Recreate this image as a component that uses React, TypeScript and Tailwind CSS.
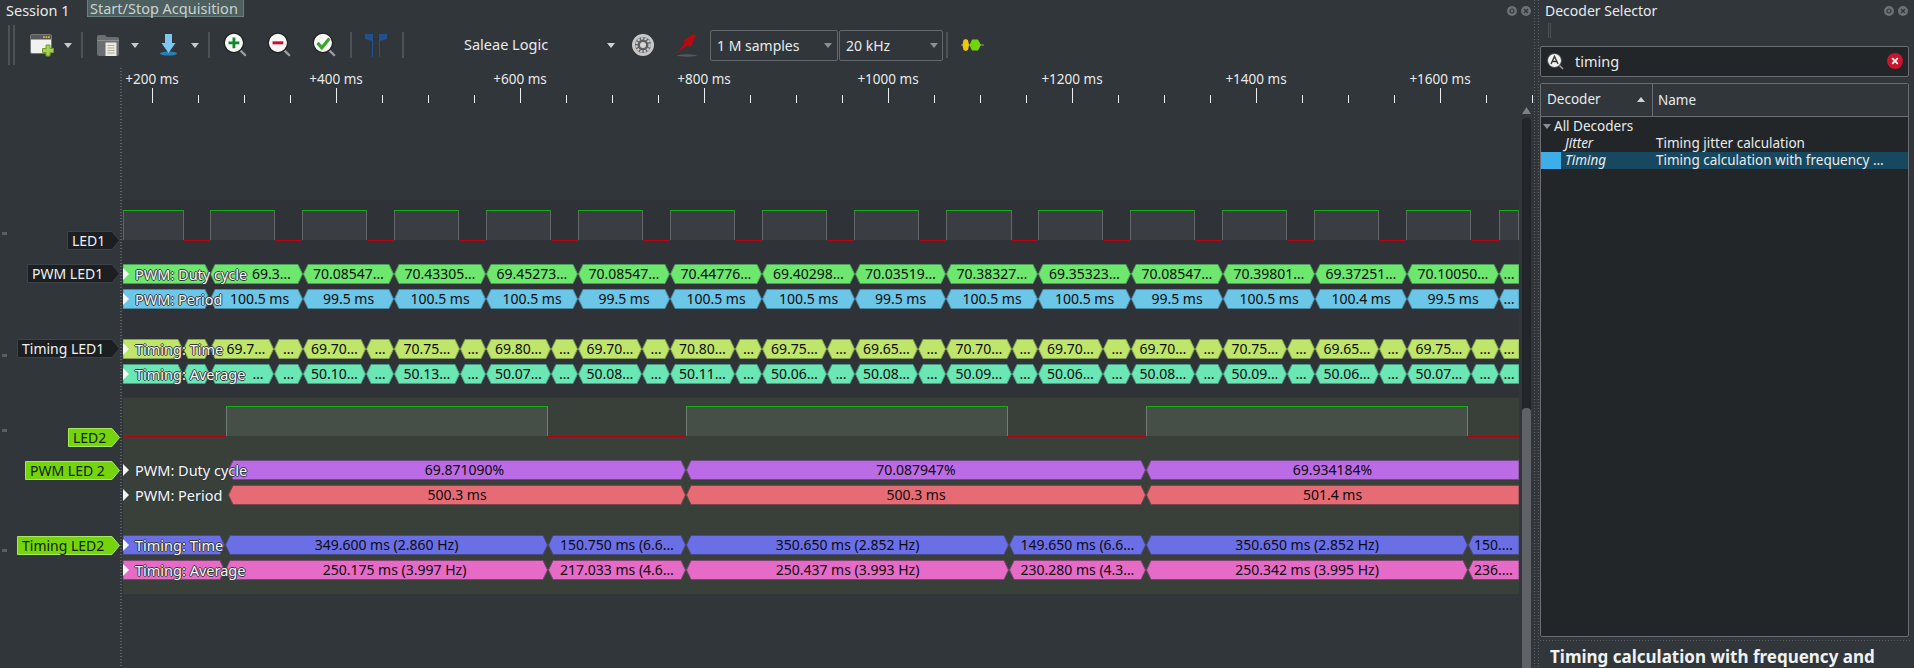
import React from "react";

type SegDef = { w: number; text?: string; pad?: number; flatL?: boolean; flatR?: boolean };

const TOP = [123, 210, 303, 394, 486, 578, 670, 762, 855, 946, 1038, 1131, 1223, 1315, 1407, 1499, 1519];
const MID = [
  123, 183, 210, 274, 303, 366, 394, 460, 486, 551, 578, 642, 670, 735, 762, 827, 855, 918, 946, 1012, 1038, 1103,
  1131, 1195, 1223, 1287, 1315, 1379, 1407, 1471, 1499, 1519,
];
const LED2_TOP = [228, 686, 1146, 1519];
const LED2_MID = [123, 225, 548, 686, 1009, 1146, 1468, 1519];

// builds the flex segments of one row from the x positions of its edges
function makeSegs(edges: number[], texts: string[], pads: Record<number, number> = {}, closeLeft = true): SegDef[] {
  return edges.slice(1).map((x, i) => ({
    w: x - edges[i],
    text: texts[i],
    pad: pads[i],
    flatL: closeLeft && i === 0,
    flatR: i === edges.length - 2,
  }));
}

const withDots = (vals: string[]) => ["", ""].concat(vals.flatMap((v) => [v, "…"]));

const rows = {
  duty: makeSegs(
    TOP,
    ["", "69.3…", "70.08547…", "70.43305…", "69.45273…", "70.08547…", "70.44776…", "69.40298…", "70.03519…", "70.38327…", "69.35323…", "70.08547…", "70.39801…", "69.37251…", "70.10050…", "…"],
    { 1: 30 },
  ),
  period: makeSegs(
    TOP,
    ["", "100.5 ms", "99.5 ms", "100.5 ms", "100.5 ms", "99.5 ms", "100.5 ms", "100.5 ms", "99.5 ms", "100.5 ms", "100.5 ms", "99.5 ms", "100.5 ms", "100.4 ms", "99.5 ms", "…"],
    { 1: 6 },
  ),
  time: makeSegs(
    MID,
    withDots(["69.7…", "69.70…", "70.75…", "69.80…", "69.70…", "70.80…", "69.75…", "69.65…", "70.70…", "69.70…", "69.70…", "70.75…", "69.65…", "69.75…", "…"]),
    { 2: 8 },
  ),
  avg: makeSegs(
    MID,
    withDots(["…", "50.10…", "50.13…", "50.07…", "50.08…", "50.11…", "50.06…", "50.08…", "50.09…", "50.06…", "50.08…", "50.09…", "50.06…", "50.07…", "…"]),
    { 2: 32 },
  ),
  duty2: makeSegs(LED2_TOP, ["69.871090%", "70.087947%", "69.934184%"], { 0: 15 }, false),
  period2: makeSegs(LED2_TOP, ["500.3 ms", "500.3 ms", "501.4 ms"], {}, false),
  time2: makeSegs(LED2_MID, ["", "349.600 ms (2.860 Hz)", "150.750 ms (6.6…", "350.650 ms (2.852 Hz)", "149.650 ms (6.6…", "350.650 ms (2.852 Hz)", "150.…"]),
  avg2: makeSegs(LED2_MID, ["", "250.175 ms (3.997 Hz)", "217.033 ms (4.6…", "250.437 ms (3.993 Hz)", "230.280 ms (4.3…", "250.342 ms (3.995 Hz)", "236.…"], { 1: 16 }),
};

const LED1_HIGH: [number, number][] = [
  [123, 184], [210, 275], [302, 367], [394, 459], [486, 551], [578, 643], [670, 735], [762, 827], [854, 919],
  [946, 1012], [1038, 1103], [1130, 1195], [1222, 1287], [1314, 1379], [1406, 1471], [1499, 1519],
];
const LED2_HIGH: [number, number][] = [[226, 548], [686, 1008], [1146, 1468]];

function Seg({ seg, fill, stroke }: { seg: SegDef; fill: string; stroke: string }) {
  const w = seg.w;
  const t = 5;
  const left = seg.flatL ? `0,0.5` : `${t},0.5`;
  const leftEnd = seg.flatL ? `0,19.5` : `${t},19.5 0.5,10`;
  const right = seg.flatR ? `${w},0.5 ${w},19.5` : `${w - t},0.5 ${w - 0.5},10 ${w - t},19.5`;
  return (
    <div className="relative h-5 shrink-0" style={{ width: w }}>
      <svg className="absolute inset-0" width={w} height={20}>
        <polygon points={`${left} ${right} ${leftEnd}`} fill={fill} stroke={stroke} strokeWidth="1" />
      </svg>
      <div className="relative text-center text-[14px] leading-5 whitespace-nowrap text-[#0c0c0c]" style={{ paddingLeft: seg.pad ?? 0 }}>
        {seg.text}
      </div>
    </div>
  );
}

function Row({ name, segs, fill, stroke, className, offset = 0 }: { name: string; segs: SegDef[]; fill: string; stroke: string; className?: string; offset?: number }) {
  return (
    <div className={`relative flex h-5 ${className ?? ""}`} style={{ paddingLeft: offset }}>
      {segs.map((s, i) => (
        <Seg key={i} seg={s} fill={fill} stroke={stroke} />
      ))}
      <svg className="absolute left-0 top-1" width="6" height="12">
        <polygon points="0,0 6,6 0,12" fill="#f4f6f6" />
      </svg>
      <span className="absolute left-3 top-0 text-[14.5px] leading-5 whitespace-nowrap text-[#f5f7f7] [text-shadow:1px_0_#33383d,-1px_0_#33383d,0_1px_#33383d,0_-1px_#33383d]">
        {name}
      </span>
    </div>
  );
}

function Tag({ text, w, green, className }: { text: string; w: number; green?: boolean; className?: string }) {
  return (
    <div className={`relative h-[19px] shrink-0 ${className ?? ""}`} style={{ width: w }}>
      <svg className="absolute inset-0" width={w} height={19}>
        <polygon
          points={`0.5,0.5 ${w - 8},0.5 ${w - 0.5},9.5 ${w - 8},18.5 0.5,18.5`}
          fill={green ? "#76d40f" : "#1b1f22"}
          stroke={green ? "#a5e95c" : "#3d4247"}
        />
      </svg>
      <div className={`relative pl-[5px] text-[14px] leading-[19px] whitespace-nowrap ${green ? "text-[#10230a]" : "text-[#eff2f2]"}`}>{text}</div>
    </div>
  );
}

function Wave({ high, block, edge }: { high: [number, number][]; block: string; edge: string }) {
  const lows: [number, number][] = [];
  let prev = 123;
  high.forEach(([a, b]) => {
    if (a > prev) lows.push([prev, a]);
    prev = b;
  });
  if (prev < 1519) lows.push([prev, 1519]);
  return (
    <svg width="1396" height="31" className="block">
      {high.map(([a, b]) => (
        <g key={a}>
          <rect x={a - 123} y="0" width={b - a} height="30" fill={block} />
          <line x1={a - 123 + 0.5} y1="0" x2={a - 123 + 0.5} y2="30" stroke={edge} />
          <line x1={b - 123 - 0.5} y1="0" x2={b - 123 - 0.5} y2="30" stroke={edge} />
          <line x1={a - 123} y1="0.5" x2={b - 123} y2="0.5" stroke="#12b012" />
        </g>
      ))}
      {lows.map(([a, b]) => (
        <line key={a} x1={a - 123} y1="30.5" x2={b - 123} y2="30.5" stroke="#b8000f" />
      ))}
    </svg>
  );
}

function Sep({ className }: { className: string }) {
  return <div className={`h-[26px] w-[2px] shrink-0 bg-[#4d5256] ${className}`} />;
}

function Caret({ className, fill = "#c6cacc" }: { className: string; fill?: string }) {
  return (
    <svg className={`shrink-0 ${className}`} width="8" height="5">
      <polygon points="0,0 8,0 4,5" fill={fill} />
    </svg>
  );
}

function DockButtons() {
  return (
    <div className="flex items-center gap-[4px]">
      {[0, 1].map((i) => (
        <svg key={i} width="10" height="10">
          <circle cx="5" cy="5" r="5" fill="#6c7175" />
          {i === 0 ? (
            <circle cx="5" cy="5" r="2" fill="none" stroke="#31363b" strokeWidth="1.2" />
          ) : (
            <path d="M3 3 L7 7 M7 3 L3 7" stroke="#31363b" strokeWidth="1.3" />
          )}
        </svg>
      ))}
    </div>
  );
}

function Lens({ className, children, ring = "#222" }: { className: string; children: React.ReactNode; ring?: string }) {
  return (
    <svg className={`shrink-0 ${className}`} width="26" height="28" viewBox="0 0 24 26">
      <path d="M16.5 17.5 L22 23" stroke="#9a9ea0" strokeWidth="2.2" />
      <circle cx="11" cy="11" r="9" fill="#f7f7f5" stroke={ring} strokeWidth="1.2" />
      {children}
    </svg>
  );
}

function Toolbar() {
  return (
    <div className="flex h-[46px] items-center pl-2">
      <div className="flex h-[40px] w-[7px] shrink-0 justify-between">
        <div className="w-[2px] bg-[#4d5256]" />
        <div className="w-[2px] bg-[#4d5256]" />
      </div>
      {/* new session */}
      <svg className="ml-[15px] shrink-0" width="24" height="23" viewBox="0 0 24 23">
        <rect x="0.5" y="0.5" width="21" height="19" rx="1.5" fill="#f1f1ef" stroke="#777" />
        <rect x="1" y="1" width="20" height="4.5" fill="#55595c" />
        <rect x="13" y="2.2" width="1.8" height="1.8" fill="#e0a83a" />
        <rect x="15.5" y="2.2" width="1.8" height="1.8" fill="#e0a83a" />
        <rect x="18" y="2.2" width="1.8" height="1.8" fill="#e0a83a" />
        <path d="M16 11 H20 V14.5 H23.5 V18.5 H20 V22 H16 V18.5 H12.5 V14.5 H16 Z" fill="#a4d250" stroke="#6f9a2c" />
      </svg>
      <Caret className="ml-[10px]" />
      <Sep className="ml-[9px]" />
      {/* open file */}
      <svg className="ml-[14px] shrink-0" width="23" height="23" viewBox="0 0 23 23">
        <path d="M0 3 Q0 1 2 1 H8 L10 3 H20 Q22 3 22 5 V20 Q22 22 20 22 H2 Q0 22 0 20 Z" fill="#6b6f72" />
        <rect x="0" y="6" width="22" height="1" fill="#8b8f92" />
        <rect x="8.5" y="8.5" width="11" height="13.5" fill="#ece9df" />
        <path d="M10.5 11.5 H17.5 M10.5 14 H17.5 M10.5 16.5 H17.5 M10.5 19 H17.5" stroke="#a8a59a" strokeWidth="0.9" />
      </svg>
      <Caret className="ml-[11px]" />
      {/* load from file */}
      <svg className="ml-[21px] shrink-0" width="17" height="22" viewBox="0 0 17 22">
        <ellipse cx="8.5" cy="19.5" rx="8.5" ry="2" fill="#2b7fb8" />
        <path d="M5 0 H12 V9 H15.5 L8.5 19 L1.5 9 H5 Z" fill="#7cc8f2" />
      </svg>
      <Caret className="ml-[14px]" />
      <Sep className="ml-[9px]" />
      <Lens className="ml-[12px]">
        <path d="M11 6 V16 M6 11 H16" stroke="#0e8a2e" strokeWidth="2.6" />
      </Lens>
      <Lens className="ml-[18px]">
        <path d="M6 11 H16" stroke="#c5122f" strokeWidth="2.8" />
      </Lens>
      <Lens className="ml-[19px]">
        <path d="M6 11 L10 15.5 L17 7" fill="none" stroke="#3aa52a" strokeWidth="3" />
      </Lens>
      <Sep className="ml-[13px]" />
      {/* markers */}
      <svg className="ml-[13px] shrink-0" width="22" height="23" viewBox="0 0 22 23">
        <path d="M0 0 H8 V23 H7 V7 L0 5 Z" fill="#23508f" />
        <path d="M22 0 H14 V23 H15 V7 L22 5 Z" fill="#23508f" />
      </svg>
      <Sep className="ml-[15px]" />
      <span className="ml-[60px] w-[143px] shrink-0 text-[14.5px] text-[#e8ebec]">Saleae Logic</span>
      <Caret className="" fill="#d0d3d5" />
      {/* device settings */}
      <svg className="ml-[16px] shrink-0" width="24" height="24" viewBox="0 0 24 24">
        <circle cx="12" cy="12" r="11" fill="#c8c8c8" />
        <circle cx="12" cy="12" r="8" fill="#5c5f61" />
        <circle cx="12" cy="12" r="6.6" fill="none" stroke="#c8c8c8" strokeWidth="2.4" strokeDasharray="2.4 1.2" />
        <circle cx="12" cy="12" r="3" fill="#d6d6d6" />
      </svg>
      {/* probe */}
      <svg className="ml-[21px] shrink-0" width="21" height="23" viewBox="0 0 21 23">
        <ellipse cx="11" cy="21.5" rx="10" ry="1.2" fill="#55595c" />
        <path d="M0 20 L9 9 L7 7 L16 1 L18 0 L20 2 L18 5 L15 13 L12 11 Z" fill="#b8090f" />
      </svg>
      <div className="ml-[13px] flex h-[31px] w-[128px] shrink-0 items-center justify-between rounded-[2px] border border-[#63686c] pl-[6px] pr-[5px] text-[14px] text-[#e8ebec]">
        <span>1 M samples</span>
        <Caret className="" fill="#8b8f92" />
      </div>
      <div className="ml-[1px] flex h-[31px] w-[104px] shrink-0 items-center justify-between rounded-[2px] border border-[#63686c] pl-[6px] pr-[4px] text-[14px] text-[#e8ebec]">
        <span>20 kHz</span>
        <Caret className="" fill="#8b8f92" />
      </div>
      <Sep className="ml-[3px]" />
      {/* decoders */}
      <svg className="ml-[13px] shrink-0" width="23" height="14" viewBox="0 0 23 14">
        <path d="M0 7 H23" stroke="#9aa06a" />
        <polygon points="4.5,1 7,2 8,7 7,12 4.5,13 2.5,12 1.5,7 2.5,2" fill="#f0c808" />
        <polygon points="11,1.5 17,1.5 20,7 17,12.5 11,12.5 8.5,7" fill="#72d40e" />
      </svg>
    </div>
  );
}

function Ruler() {
  const labels = ["+200 ms", "+400 ms", "+600 ms", "+800 ms", "+1000 ms", "+1200 ms", "+1400 ms", "+1600 ms"];
  return (
    <div className="relative h-[38px]">
      <div className="flex pl-[60px] pt-[1px]">
        {labels.map((l) => (
          <span key={l} className="w-[184px] shrink-0 text-center text-[13.5px] leading-[20px] text-[#e8ebec]">
            {l}
          </span>
        ))}
      </div>
      <svg className="absolute left-0 top-[20px]" width="1533" height="16">
        {Array.from({ length: 32 }, (_, i) => {
          const x = 152.5 + i * 46;
          return <line key={i} x1={x} x2={x} y1={i % 4 === 0 ? 0 : 7} y2="15" stroke="#eceeef" />;
        })}
      </svg>
    </div>
  );
}

function Dash({ className }: { className: string }) {
  return <div className={`absolute left-[2px] h-[3px] w-[5px] bg-[#5a5f63] ${className}`} />;
}

function Tracks() {
  return (
    <div className="w-[1519px] shrink-0">
      <div className="h-[94px]" />
      {/* LED1 group */}
      <div className="relative mb-[1px] flex">
        <Dash className="top-[32px]" />
        <Dash className="top-[154px]" />
        <div className="flex w-[120px] shrink-0 flex-col items-end">
          <Tag text="LED1" w={53} className="mt-[31px]" />
          <Tag text="PWM LED1" w={93} className="mt-[14px]" />
          <Tag text="Timing LED1" w={103} className="mt-[56px]" />
        </div>
        <div className="ml-[3px] h-[197px] w-[1396px] shrink-0 bg-[#2f3338] pt-[10px]">
          <Wave high={LED1_HIGH} block="#3a3e43" edge="#63676a" />
          <Row name="PWM: Duty cycle" segs={rows.duty} fill="#6ee76f" stroke="#4d9c5c" className="mt-[23px]" />
          <Row name="PWM: Period" segs={rows.period} fill="#6bc6e8" stroke="#4a8aa3" className="mt-[5px]" />
          <Row name="Timing: Time" segs={rows.time} fill="#bfe56b" stroke="#84a054" className="mt-[30px]" />
          <Row name="Timing: Average" segs={rows.avg} fill="#6be6b5" stroke="#4a9c80" className="mt-[5px]" />
        </div>
      </div>
      {/* LED2 group */}
      <div className="relative flex">
        <Dash className="top-[31px]" />
        <Dash className="top-[151px]" />
        <div className="flex w-[120px] shrink-0 flex-col items-end">
          <Tag text="LED2" w={52} green className="mt-[30px]" />
          <Tag text="PWM LED 2" w={95} green className="mt-[14px]" />
          <Tag text="Timing LED2" w={103} green className="mt-[56px]" />
        </div>
        <div className="ml-[3px] h-[196px] w-[1396px] shrink-0 bg-[#394039] pt-[8px]">
          <Wave high={LED2_HIGH} block="#454e47" edge="#747a76" />
          <Row name="PWM: Duty cycle" segs={rows.duty2} fill="#bc6be6" stroke="#6f4a82" className="mt-[23px]" offset={105} />
          <Row name="PWM: Period" segs={rows.period2} fill="#e66b74" stroke="#7d444a" className="mt-[5px]" offset={105} />
          <Row name="Timing: Time" segs={rows.time2} fill="#6b6fe6" stroke="#484b82" className="mt-[30px]" />
          <Row name="Timing: Average" segs={rows.avg2} fill="#e66bc6" stroke="#7d4472" className="mt-[5px]" />
        </div>
      </div>
    </div>
  );
}

function DecoderPanel() {
  return (
    <div className="flex w-[374px] shrink-0 flex-col">
      <div className="flex h-[22px] items-center justify-between pl-[5px] pr-[6px]">
        <span className="text-[14px] text-[#e8ebec]">Decoder Selector</span>
        <DockButtons />
      </div>
      <div className="flex h-[24px] gap-[1px] pl-[8px] pt-[1px]">
        <div className="h-[15px] w-[1px] bg-[#4d5256]" />
        <div className="h-[15px] w-[1px] bg-[#4d5256]" />
      </div>
      <div className="flex h-[31px] w-[369px] items-center rounded-[2px] border border-[#6a6e72] bg-[#232629] pl-[6px] pr-[5px]">
        <svg className="shrink-0" width="17" height="17" viewBox="0 0 17 17">
          <path d="M11 11 L16 16" stroke="#9a9ea0" strokeWidth="1.6" />
          <circle cx="7.5" cy="7.5" r="7" fill="#f2f2f0" stroke="#444" />
          <path d="M4 11 L7.5 3.5 L11 11 M5.5 8.5 H9.5" fill="none" stroke="#333" strokeWidth="1.4" />
        </svg>
        <span className="ml-[11px] flex-1 text-[14.5px] text-[#e8ebec]">timing</span>
        <svg width="16" height="16" viewBox="0 0 16 16">
          <circle cx="8" cy="8" r="8" fill="#c9152f" />
          <path d="M5.2 5.2 L10.8 10.8 M10.8 5.2 L5.2 10.8" stroke="#f6f6f6" strokeWidth="1.8" />
        </svg>
      </div>
      <div className="mt-[6px] flex h-[555px] w-[369px] flex-col overflow-hidden rounded-[2px] border border-[#6a6e72] bg-[#232629] text-[13.5px] text-[#e8ebec]">
        <div className="flex h-[33px] shrink-0 border-b border-[#6a6e72] bg-[#31363b] leading-[33px]">
          <div className="flex w-[112px] shrink-0 items-center justify-between border-r border-[#6a6e72] pl-[6px] pr-[7px]">
            <span>Decoder</span>
            <svg width="8" height="5">
              <polygon points="4,0 8,5 0,5" fill="#d0d3d5" />
            </svg>
          </div>
          <span className="pl-[5px]">Name</span>
        </div>
        <div className="flex h-[18px] items-center pl-[2px] pt-[2px]">
          <Caret className="" fill="#8b8f92" />
          <span className="ml-[3px] leading-[17px]">All Decoders</span>
        </div>
        <div className="flex h-[17px] items-center">
          <span className="w-[115px] shrink-0 pl-[24px] italic">Jitter</span>
          <span>Timing jitter calculation</span>
        </div>
        <div className="flex h-[17px] items-center bg-[#18485f]">
          <div className="h-full w-[20px] shrink-0 bg-[#3daee9]" />
          <span className="w-[95px] shrink-0 pl-[4px] italic">Timing</span>
          <span className="whitespace-nowrap">Timing calculation with frequency …</span>
        </div>
      </div>
      <div className="mt-[3px] h-[1px] w-[370px] bg-[repeating-linear-gradient(to_right,#5a5f63_0_1px,transparent_1px_3px)]" />
      <div className="pl-[10px] pt-[4px] text-[17px] leading-[23px] font-bold whitespace-nowrap text-[#eff2f2]">Timing calculation with frequency and</div>
    </div>
  );
}

export default function App() {
  return (
    <div className="relative flex h-[668px] w-[1914px] overflow-hidden bg-[#31363b] font-['Noto_Sans',sans-serif]">
      <div className="relative flex w-[1533px] shrink-0 flex-col">
        <div className="flex h-[22px] items-center justify-between pl-[6px] pr-[2px]">
          <span className="text-[14.5px] text-[#e8ebec]">Session 1</span>
          <DockButtons />
        </div>
        <Toolbar />
        <Ruler />
        <div className="flex min-h-0 flex-1">
          <Tracks />
          <div className="ml-[3px] flex w-[9px] shrink-0 flex-col">
            <svg className="mt-[1px] shrink-0" width="9" height="7">
              <polygon points="4.5,0 9,7 0,7" fill="#7c8083" />
            </svg>
            <div className="mt-[4px] flex-1 rounded-t-[4px] bg-[#232629] pt-[290px]">
              <div className="h-full rounded-t-[4px] bg-[#5f6366]" />
            </div>
          </div>
        </div>
        <div className="absolute bottom-0 left-[120px] top-[68px] w-[2px] bg-[repeating-linear-gradient(to_bottom,#5a5f63_0_1px,transparent_1px_3px)]" />
      </div>
      <div className="flex w-[7px] shrink-0 justify-center gap-[3px]">
        <div className="w-[1px] bg-[repeating-linear-gradient(to_bottom,#5a5f63_0_1px,transparent_1px_3px)]" />
        <div className="w-[1px] bg-[repeating-linear-gradient(to_bottom,#5a5f63_0_1px,transparent_1px_3px)]" />
      </div>
      <DecoderPanel />
      <div className="absolute left-[87px] top-0 h-[17px] w-[157px] border border-t-0 border-[#6b7f7f] bg-[#4d5f5f] pl-[2px] text-[14.5px] leading-[16px] whitespace-nowrap text-[#c8d3d1]">
        Start/Stop Acquisition
      </div>
    </div>
  );
}
